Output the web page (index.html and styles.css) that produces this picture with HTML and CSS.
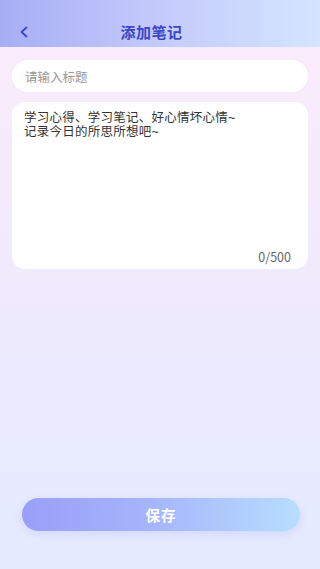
FILE: index.html
```html
<!DOCTYPE html>
<html lang="zh">
  <head>
    <meta charset="UTF-8" />
    <meta name="viewport" content="width=device-width, initial-scale=1.0" />
    <title>添加笔记</title>
    <link rel="stylesheet" href="styles.css">
  </head>
  <body>
    <div class="page">
      <header class="header">
        <span class="header_back">
          <svg width="10" height="12" viewBox="0 0 10 12">
            <path d="M7.5 1.5 L2.5 6 L7.5 10.5" fill="none" stroke="#3c46c6" stroke-width="1.8" stroke-linecap="round" stroke-linejoin="round" />
          </svg>
        </span>
        <h1 class="header_title">添加笔记</h1>
      </header>

      <main class="note x-margin">
        <div class="note_title">请输入标题</div>
        <div class="note_card">
          <p class="note_text">学习心得、学习笔记、好心情坏心情~<br />记录今日的所思所想吧~</p>
          <p class="note_count">0/500</p>
        </div>
      </main>

      <footer class="footer">
        <button class="save_btn">保存</button>
      </footer>
    </div>
  </body>
</html>
```

FILE: styles.css
```css
/* variables */
:root {
  --titleColor: #3c46c6;
  --textColor: #333;
  --hintColor: #999;
}

/* base */
*,
::before,
::after {
  box-sizing: border-box;
  margin: 0;
  padding: 0;
}
body {
  font-family: "Noto Sans CJK SC", "Noto Sans", sans-serif;
  color: var(--textColor);
  background: #e6ebff;
}

.x-margin {
  margin: 0 12px;
}

.page {
  display: flex;
  flex-direction: column;
  min-height: 100vh;
  background: linear-gradient(180deg, #fcecfb 0%, #f2eafd 40%, #e4ebff 100%);
}

/* header */
.header {
  position: relative;
  height: 47px;
  display: flex;
  justify-content: center;
  align-items: center;
  padding-top: 16px;
  padding-right: 17px;
  background: linear-gradient(90deg, #a7aef5 0%, #c4cbfb 50%, #d4e5ff 100%);
}
.header_back {
  position: absolute;
  left: 19px;
  top: 26px;
  display: flex;
}
.header_title {
  font-size: 15px;
  font-weight: bold;
  color: var(--titleColor);
  letter-spacing: 0.5px;
}

/* note */
.note {
  display: flex;
  flex-direction: column;
  row-gap: 10px;
  margin-top: 13px;
}
.note_title {
  height: 32px;
  border-radius: 16px;
  background-color: #fff;
  display: flex;
  align-items: center;
  padding-left: 13px;
  font-size: 12.5px;
  color: var(--hintColor);
}
.note_card {
  height: 167px;
  border-radius: 13px;
  background-color: #fff;
  display: flex;
  flex-direction: column;
  justify-content: space-between;
  padding: 9px 17px 3px 12px;
}
.note_text {
  font-family: "Liberation Sans", "Noto Sans CJK SC", sans-serif;
  font-size: 12.5px;
  line-height: 14px;
  letter-spacing: 0.25px;
  color: var(--textColor);
}
.note_count {
  align-self: flex-end;
  font-size: 12.5px;
  color: #666;
}

/* footer */
.footer {
  margin-top: auto;
  display: flex;
  justify-content: center;
  padding-bottom: 38px;
}
.save_btn {
  width: 278px;
  height: 33px;
  margin-left: 2px;
  border: none;
  border-radius: 17px;
  background: linear-gradient(90deg, #999ff9 0%, #a6b4fb 45%, #b7defe 100%);
  box-shadow: 0 3px 8px rgba(150, 160, 240, 0.25);
  color: #fff;
  font-family: inherit;
  font-size: 14.5px;
  font-weight: bold;
  letter-spacing: 1px;
}
```
